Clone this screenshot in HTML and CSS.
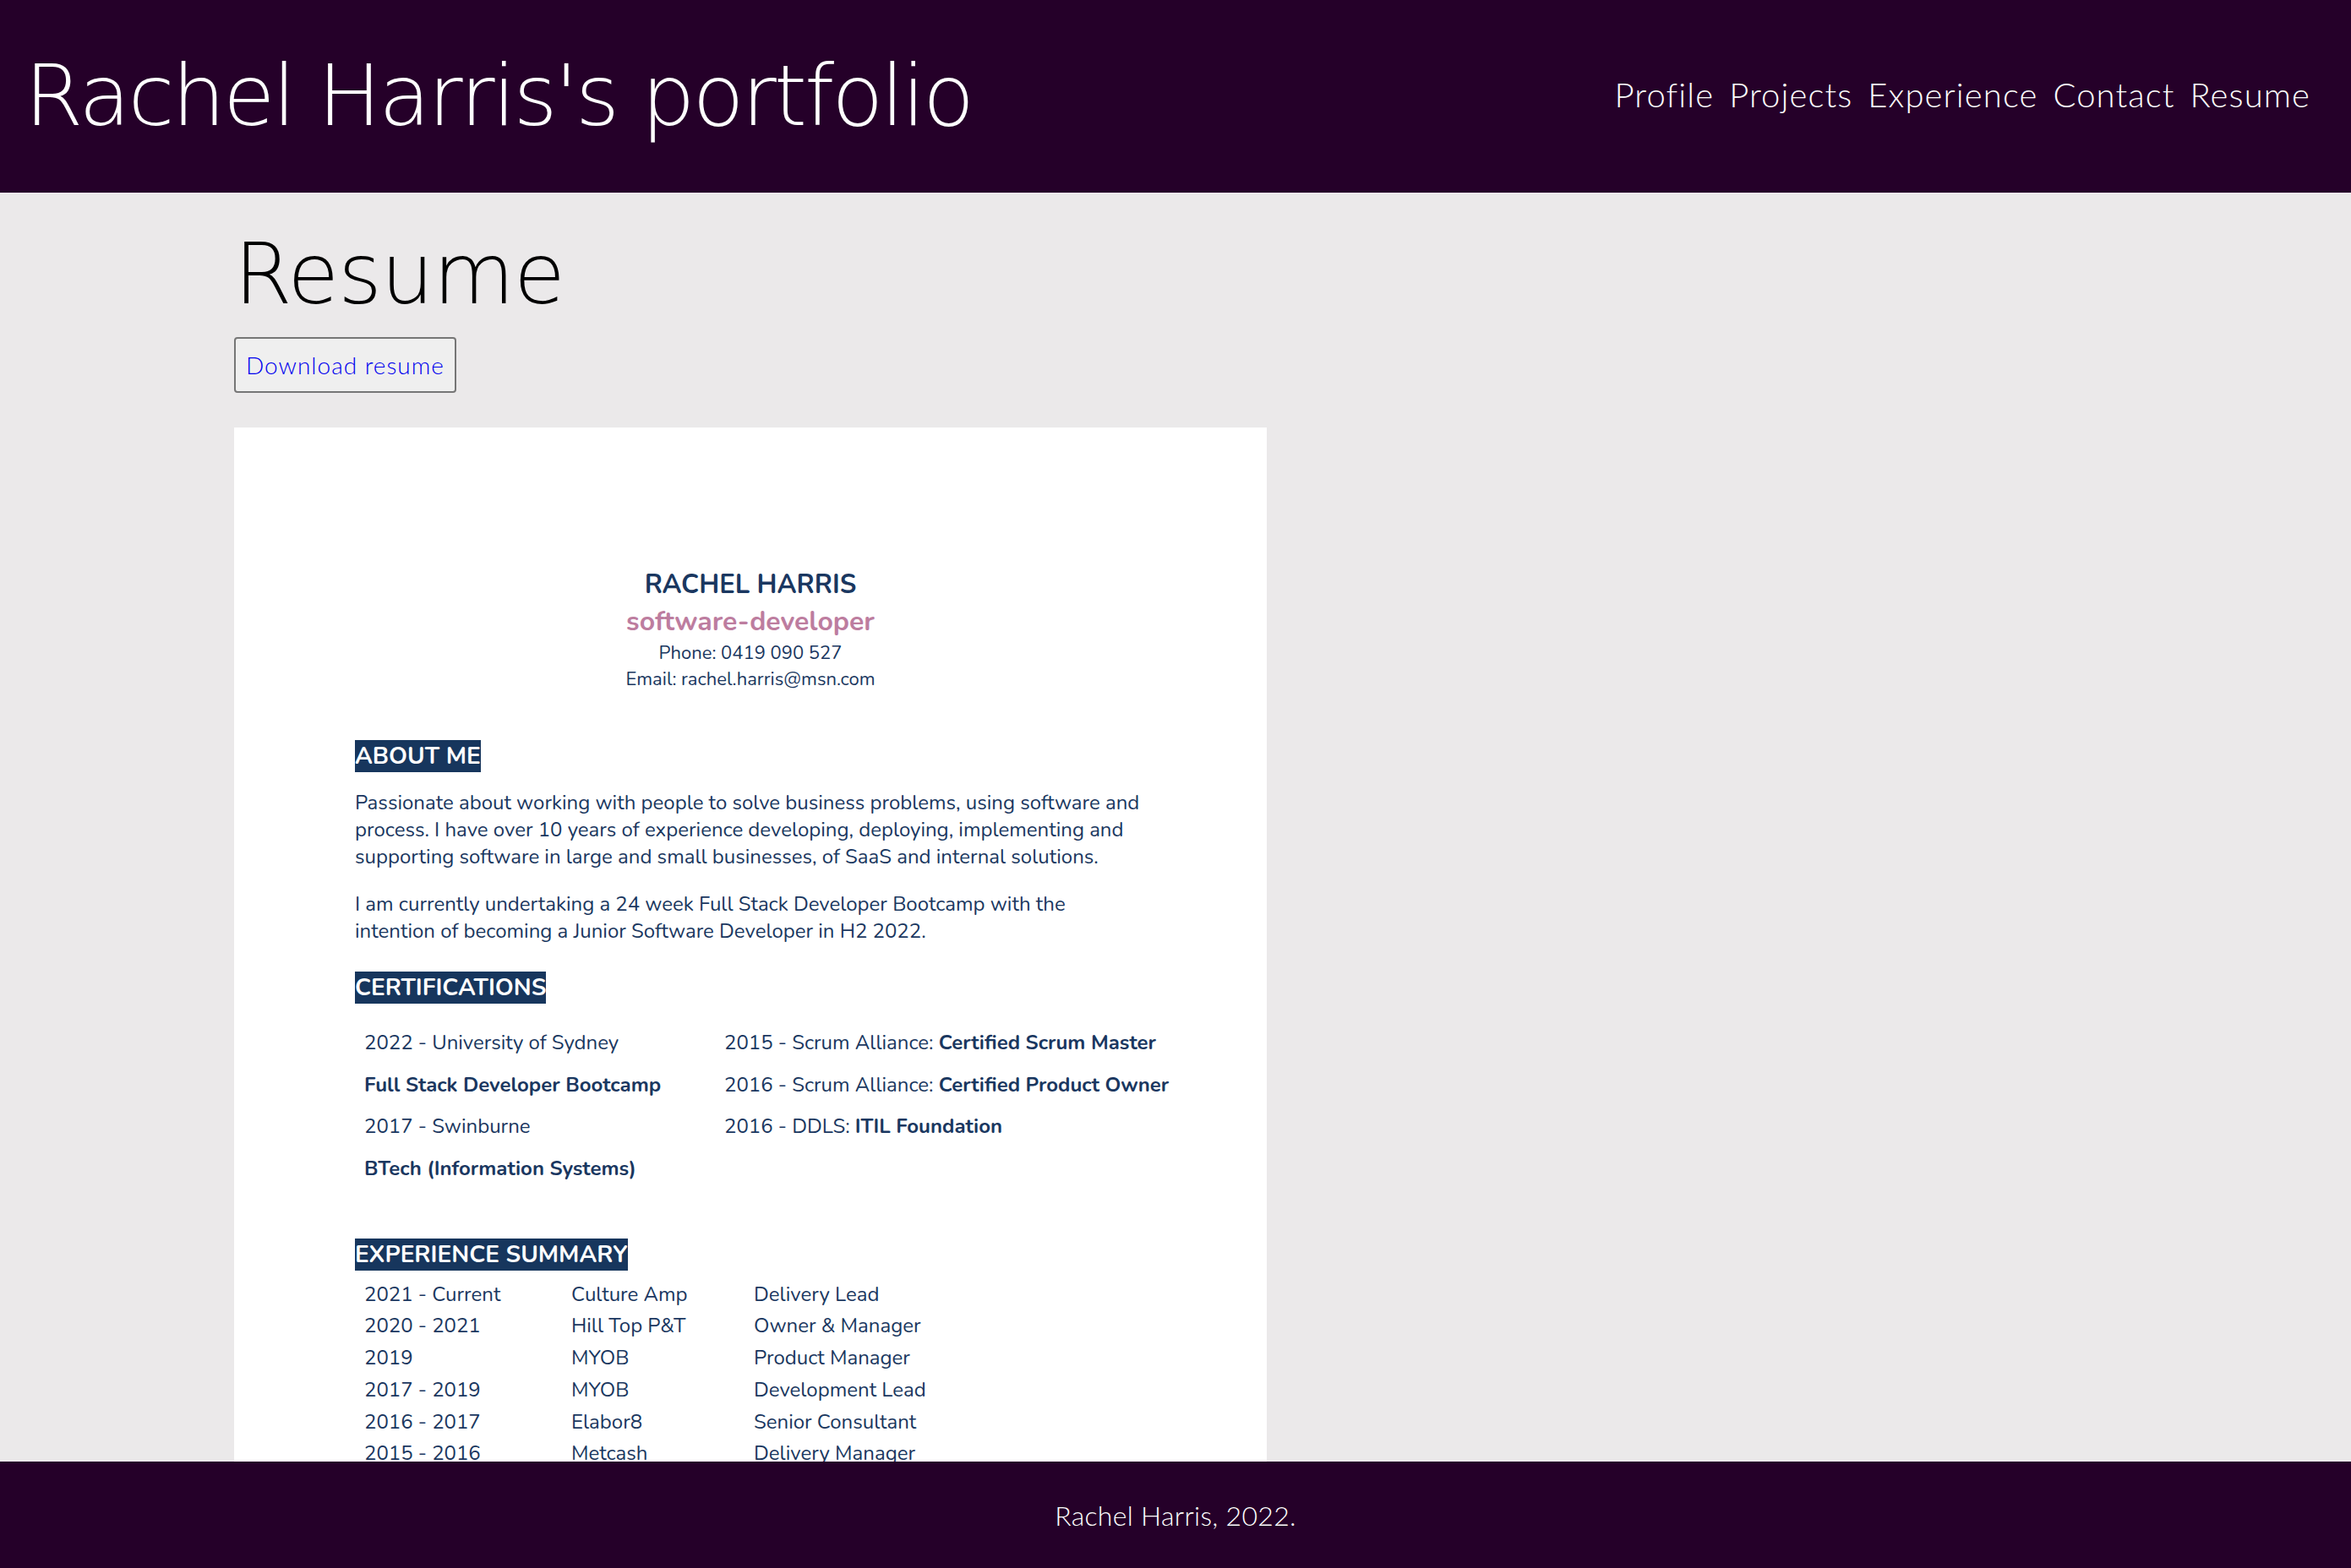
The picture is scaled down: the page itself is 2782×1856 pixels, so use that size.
FILE: index.html
```html
<!DOCTYPE html>
<html lang="en">
<head>
<meta charset="utf-8">
<title>Rachel Harris's portfolio</title>
<link rel="stylesheet" href="styles.css">
</head>
<body class="page">
<header class="site-header">
  <h1 class="site-title">Rachel Harris's portfolio</h1>
  <nav class="site-nav">
    <a href="#">Profile</a>
    <a href="#">Projects</a>
    <a href="#">Experience</a>
    <a href="#">Contact</a>
    <a href="#">Resume</a>
  </nav>
</header>
<main class="content">
  <h2 class="page-title">Resume</h2>
  <button class="download" type="button"><a href="#">Download resume</a></button>
  <div class="resume-frame">
    <article class="resume">
      <div class="resume-head">
        <div class="r-name">RACHEL HARRIS</div>
        <div class="r-role">software-developer</div>
        <div class="r-contact">Phone: 0419 090 527</div>
        <div class="r-contact">Email: rachel.harris@msn.com</div>
      </div>

      <h3 class="r-section about-h"><span>ABOUT ME</span></h3>
      <p class="r-para p1">Passionate about working with people to solve business problems, using software and<br>process. I have over 10 years of experience developing, deploying, implementing and<br>supporting software in large and small businesses, of SaaS and internal solutions.</p>
      <p class="r-para p2">I am currently undertaking a 24 week Full Stack Developer Bootcamp with the<br>intention of becoming a Junior Software Developer in H2 2022.</p>

      <h3 class="r-section cert-h"><span>CERTIFICATIONS</span></h3>
      <div class="certs">
        <div>2022 - University of Sydney</div>
        <div>2015 - Scrum Alliance: <b>Certified Scrum Master</b></div>
        <div><b>Full Stack Developer Bootcamp</b></div>
        <div>2016 - Scrum Alliance: <b>Certified Product Owner</b></div>
        <div>2017 - Swinburne</div>
        <div>2016 - DDLS: <b>ITIL Foundation</b></div>
        <div><b>BTech (Information Systems)</b></div>
        <div></div>
      </div>

      <h3 class="r-section exp-h"><span>EXPERIENCE SUMMARY</span></h3>
      <div class="exp">
        <div>2021 - Current</div><div>Culture Amp</div><div>Delivery Lead</div>
        <div>2020 - 2021</div><div>Hill Top P&amp;T</div><div>Owner &amp; Manager</div>
        <div>2019</div><div>MYOB</div><div>Product Manager</div>
        <div>2017 - 2019</div><div>MYOB</div><div>Development Lead</div>
        <div>2016 - 2017</div><div>Elabor8</div><div>Senior Consultant</div>
        <div>2015 - 2016</div><div>Metcash</div><div>Delivery Manager</div>
        <div>2012 - 2015</div><div>Metcash</div><div>Development Lead</div>
      </div>
    </article>
  </div>
</main>
<footer class="site-footer">Rachel Harris, 2022.</footer>
</body>
</html>
```
FILE: styles.css
```css
html, body {
  margin: 0;
  padding: 0;
}

.page {
  height: 100vh;
  display: flex;
  flex-direction: column;
  overflow: hidden;
  background: #ebe9ea;
  font-family: "Lato", "Open Sans", sans-serif;
}

.site-header {
  flex: 0 0 228px;
  box-sizing: border-box;
  background: #250029;
  color: #ffffff;
  display: flex;
  align-items: center;
  justify-content: space-between;
  padding: 0 48px 0 29px;
}

.site-title {
  margin: 0;
  font-family: "DejaVu Sans", "Lato", sans-serif;
  font-size: 100px;
  line-height: 1;
  font-weight: 200;
  letter-spacing: -3px;
}

.site-nav {
  display: flex;
  gap: 18px;
  padding-bottom: 5px;
}

.site-nav a {
  color: #ffffff;
  text-decoration: none;
  font-size: 40px;
  line-height: 1;
  font-weight: 300;
  letter-spacing: 1.1px;
}

.content {
  flex: 1 1 0;
  min-height: 0;
  overflow: hidden;
  padding: 47px 0 0 277px;
}

.page-title {
  margin: 0;
  font-family: "DejaVu Sans", "Lato", sans-serif;
  font-size: 99px;
  line-height: 1;
  font-weight: 200;
  letter-spacing: -1px;
  color: #000000;
}

.download {
  display: block;
  margin-top: 25px;
  height: 66px;
  box-sizing: border-box;
  padding: 0 12px;
  background: #efefef;
  border: 2px solid #767676;
  border-radius: 4px;
  font-family: inherit;
}

.download a {
  color: #0000ee;
  text-decoration: none;
  font-size: 28px;
  font-weight: 300;
  letter-spacing: 1px;
}

.resume-frame {
  margin-top: 41px;
  width: 1222px;
  height: 1600px;
  background: #ffffff;
}

.resume {
  padding: 166px 143px 0 143px;
  color: #1a3760;
  font-family: "Nunito", "Lato", sans-serif;
}

.resume-head {
  text-align: center;
}

.r-name {
  font-size: 31px;
  line-height: 40px;
  font-weight: 700;
  margin-bottom: 4px;
}

.r-role {
  font-size: 32px;
  line-height: 40px;
  font-weight: 700;
  color: #bd7d9f;
  margin-bottom: 2px;
}

.r-contact {
  font-size: 22px;
  line-height: 31px;
}

.r-section {
  margin: 0;
  font-size: 28px;
  line-height: 38px;
  font-weight: 700;
}

.r-section span {
  display: inline-block;
  background: #17365d;
  color: #ffffff;
}

.about-h { margin-top: 56px; }
.cert-h { margin-top: 32px; }
.exp-h { margin-top: 57px; }

.r-para {
  margin: 0;
  font-size: 24px;
  line-height: 32px;
}

.p1 { margin-top: 20px; }
.p2 { margin-top: 24px; }

.certs {
  margin-top: 22px;
  padding-left: 11px;
  display: grid;
  grid-template-columns: 426px auto;
  grid-auto-rows: 49.7px;
  font-size: 24px;
  line-height: 49.7px;
  white-space: nowrap;
}

.exp {
  margin-top: 10px;
  padding-left: 11px;
  display: grid;
  grid-template-columns: 245px 216px auto;
  grid-auto-rows: 37.7px;
  font-size: 24px;
  line-height: 37.7px;
  white-space: nowrap;
}

.site-footer {
  flex: 0 0 126px;
  background: #250029;
  color: #ffffff;
  display: flex;
  align-items: center;
  justify-content: center;
  font-size: 32px;
  font-weight: 300;
  letter-spacing: 0.3px;
}
```
